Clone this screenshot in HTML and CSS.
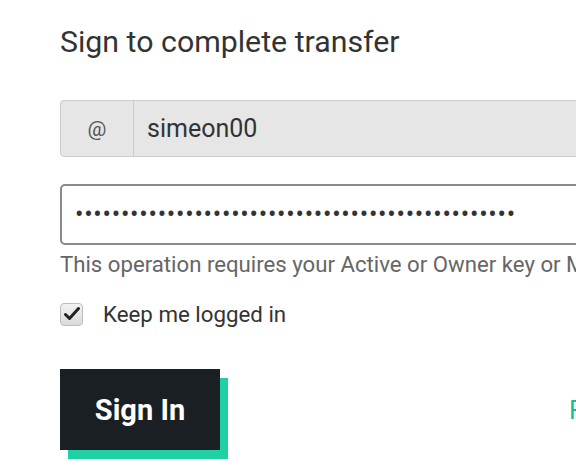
FILE: index.html
```html
<!DOCTYPE html>
<html>
<head>
    <title>Sign to complete transfer</title>
    <meta name="viewport" content="width=device-width, initial-scale=1.0">
    <link rel="stylesheet" href="styles.css">
</head>
<body>
    <div class="page">
        <div class="sign-form">
            <h2 class="title">Sign to complete transfer</h2>

            <!-- account name -->
            <div class="input-group">
                <span class="addon">@</span>
                <input type="text" class="field field-disabled" value="simeon00" disabled>
            </div>

            <!-- key / password -->
            <input type="password" class="field field-key" value="abcdefghijklmnopqrstuvwxyzabcdefghijklmnopqrstuv">
            <p class="help-text">This operation requires your Active or Owner key or Master password</p>

            <label class="keep-logged">
                <span class="check">
                    <svg width="16" height="14" viewBox="0 0 16 14"><path d="M1.5 7.5 L5.5 11.5 L14.5 1.5" fill="none" stroke="#222" stroke-width="3" stroke-linecap="round" stroke-linejoin="round"/></svg>
                </span>
                <span>Keep me logged in</span>
            </label>

            <div class="actions">
                <button class="btn-sign">Sign In</button>
                <a href="#" class="forgot">Forgot password?</a>
            </div>
        </div>
    </div>
</body>
</html>
```

FILE: styles.css
```css
body {
    font-family: Roboto, "Liberation Sans", sans-serif;
    background-color: #ffffff;
    color: #333333;
    margin: 0;
}

/* page is wider than the phone screen */
.page {
    width: 100%;
    overflow: hidden;
}

/* whole dialog body */
.sign-form {
    width: 720px;
    padding: 24px 0 20px 60px;
}

.title {
    font-size: 30.3px;
    font-weight: 400;
    margin: 0 0 40px;
    color: #333333;
    line-height: 36px;
}

/* @ + username */
.input-group {
    display: flex;
    height: 57px;
    border: 1px solid #cccccc;
    border-radius: 4px;
    background-color: #e6e6e6;
    box-sizing: border-box;
    overflow: hidden;
    margin-bottom: 27px;
}

.addon {
    width: 72px;
    flex: none;
    display: flex;
    align-items: center;
    justify-content: center;
    border-right: 1px solid #cccccc;
    font-size: 21px;
    color: #555555;
}

.field {
    font-family: Roboto, "Liberation Sans", sans-serif;
    font-size: 25px;
    color: #333333;
    box-sizing: border-box;
    outline: none;
}

.field-disabled {
    flex: 1;
    border: none;
    background: transparent;
    padding: 0 13px;
    -webkit-text-fill-color: #333333;
}

.field-key {
    display: block;
    width: 100%;
    height: 61px;
    border: 2px solid #8a8a8a;
    border-radius: 5px;
    padding: 0 13px;
    background: #ffffff;
    letter-spacing: 0.75px;
}

.help-text {
    margin: 5px 0 0;
    font-size: 22.2px;
    color: #666666;
    white-space: nowrap;
    line-height: 28px;
}

.keep-logged {
    display: flex;
    align-items: center;
    margin-top: 22px;
    font-size: 22.3px;
    color: #333333;
    line-height: 28px;
}

/* grey legacy style checkbox */
.check {
    width: 21px;
    height: 21px;
    margin-right: 20px;
    border: 1px solid #bdbdbd;
    border-radius: 4px;
    background: linear-gradient(#f2f2f2, #dadada);
    display: flex;
    align-items: center;
    justify-content: center;
}

.actions {
    display: flex;
    align-items: center;
    margin-top: 41px;
}

/* dark button with teal offset block */
.btn-sign {
    font-family: Roboto, "Liberation Sans", sans-serif;
    font-size: 29px;
    font-weight: 700;
    color: #ffffff;
    background-color: #1a1f24;
    border: none;
    width: 160px;
    height: 81px;
    box-shadow: 8px 9px 0 #1fd1a2;
    cursor: pointer;
}

.forgot {
    margin-left: 349px;
    font-size: 26px;
    color: #1fb88f;
    text-decoration: none;
}
```
